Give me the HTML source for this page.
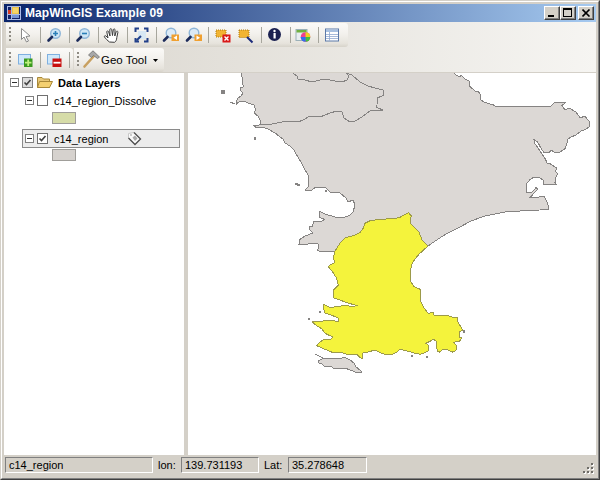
<!DOCTYPE html>
<html><head><meta charset="utf-8">
<style>
*{margin:0;padding:0;box-sizing:border-box}
html,body{width:600px;height:480px;overflow:hidden;background:#d4d0c8;font-family:"Liberation Sans",sans-serif}
.abs{position:absolute}
#win{position:absolute;left:0;top:0;width:600px;height:480px;background:#d4d0c8;overflow:hidden}
#title{position:absolute;left:4px;top:4px;width:592px;height:18px;background:linear-gradient(to right,#0a246a,#a6caf0)}
#ttext{position:absolute;left:21px;top:2px;color:#fff;font-weight:bold;font-size:12px;line-height:14px;letter-spacing:0.1px;white-space:nowrap}
.tb{position:absolute;height:24px;background:linear-gradient(to bottom,#fbfaf8 0%,#f3f1ed 45%,#e6e3dc 85%,#d7d3ca 100%);border-radius:0 3px 3px 0}
.grip{position:absolute;left:3px;top:4px;width:2px;height:14px;background:repeating-linear-gradient(to bottom,#8f8c84 0 2px,transparent 2px 4px)}
.sep{position:absolute;top:4px;width:1px;height:16px;background:#a7a69d}
.tree{position:absolute;font-size:11px;line-height:13px;color:#000;white-space:nowrap}
.exp{position:absolute;width:9px;height:9px;border:1px solid #808080;background:#fff}
.exp::after{content:"";position:absolute;left:1px;top:3px;width:5px;height:1px;background:#303030}
.chk{position:absolute;width:11px;height:11px;border:1px solid #707070;background:#fff}
.sw{position:absolute;width:24px;height:12px;border:1px solid #a09e9a}
.sp{position:absolute;top:457px;height:16px;border-top:1px solid #808080;border-left:1px solid #808080;border-right:1px solid #fff;border-bottom:1px solid #fff;font-size:11px;color:#000;padding-left:3px;line-height:14px;white-space:nowrap}
.sl{position:absolute;top:458px;font-size:11px;line-height:14px;color:#000}
</style></head>
<body>
<div id="win">
 <!-- window frame -->
 <div class="abs" style="left:0;top:0;width:600px;height:480px;border-top:1px solid #d4d0c8;border-left:1px solid #d4d0c8;border-right:1px solid #404040;border-bottom:1px solid #404040"></div>
 <div class="abs" style="left:1px;top:1px;width:598px;height:478px;border-top:1px solid #fff;border-left:1px solid #fff;border-right:1px solid #808080;border-bottom:1px solid #808080"></div>
 <div id="title">
  <svg class="abs" style="left:3px;top:2px" width="14" height="14" viewBox="0 0 14 14">
   <rect x="0" y="0" width="14" height="14" fill="#a9b9e6"/>
   <rect x="1" y="1" width="12" height="12" fill="#132268"/>
   <rect x="5" y="1" width="7" height="7" fill="#e9c24a"/>
   <rect x="6" y="2" width="5" height="5" fill="#f5d46a"/>
   <rect x="1" y="4" width="3" height="5" fill="#d63a22"/>
   <rect x="5" y="9" width="7" height="3" fill="#7694d4"/>
   <rect x="4" y="0" width="1" height="14" fill="#a9b9e6"/>
   <rect x="0" y="8" width="14" height="1" fill="#a9b9e6"/>
  </svg>
  <div id="ttext">MapWinGIS Example 09</div>
  <div class="abs" style="left:540px;top:2px;width:16px;height:14px;background:#d4d0c8;border:1px solid;border-color:#fff #404040 #404040 #fff;box-shadow:inset -1px -1px 0 #808080"><div class="abs" style="left:3px;top:8px;width:6px;height:2px;background:#000"></div></div>
  <div class="abs" style="left:556px;top:2px;width:16px;height:14px;background:#d4d0c8;border:1px solid;border-color:#fff #404040 #404040 #fff;box-shadow:inset -1px -1px 0 #808080"><div class="abs" style="left:2px;top:1px;width:9px;height:9px;border:1px solid #000;border-top-width:2px"></div></div>
  <div class="abs" style="left:574px;top:2px;width:16px;height:14px;background:#d4d0c8;border:1px solid;border-color:#fff #404040 #404040 #fff;box-shadow:inset -1px -1px 0 #808080">
   <svg class="abs" style="left:3px;top:2px" width="9" height="8" viewBox="0 0 9 8"><path d="M0.5,0.5 L7.5,7.5 M7.5,0.5 L0.5,7.5" stroke="#000" stroke-width="1.6"/></svg>
  </div>
 </div>
 <!-- toolbar area -->
 <div class="abs" style="left:4px;top:22px;width:592px;height:50px;background:linear-gradient(to right,#d8d4cc,#f6f5f2)"></div>
 <div class="tb" style="left:6px;top:23px;width:342px">
  <div class="grip"></div>
  <div class="sep" style="left:34px"></div>
  <div class="sep" style="left:63px"></div>
  <div class="sep" style="left:92px"></div>
  <div class="sep" style="left:121px"></div>
  <div class="sep" style="left:150px"></div>
  <div class="sep" style="left:202px"></div>
  <div class="sep" style="left:255px"></div>
  <div class="sep" style="left:284px"></div>
  <div class="sep" style="left:312px"></div>
 </div>
 <div class="tb" style="left:6px;top:48px;width:67px">
  <div class="grip"></div>
  <div class="sep" style="left:34px"></div>
  <div class="sep" style="left:63px"></div>
 </div>
 <div class="tb" style="left:74px;top:48px;width:90px">
  <div class="grip"></div>
  <div class="abs" style="left:27px;top:4px;font-size:11.5px;line-height:16px;color:#000;white-space:nowrap">Geo Tool</div>
  <svg class="abs" style="left:79px;top:11px" width="6" height="4" viewBox="0 0 6 4"><path d="M0,0 H5 L2.5,3 Z" fill="#000"/></svg>
 </div>
  <svg class="abs" style="left:0;top:0" width="600" height="72" viewBox="0 0 600 72">
  <!-- arrow -->
  <path d="M21.5,28.5 V39.5 L24,37 L26.5,42 L28.5,41 L26,36.5 L30,36 Z" fill="#fff" stroke="#8a8a8a" stroke-width="1"/>
  <!-- zoom in -->
  <circle cx="55.5" cy="33.5" r="4.8" fill="#cfe6f5" stroke="#8fb6d8" stroke-width="1.4"/>
  <path d="M48.5,40.5 L52,37" stroke="#1c2b5a" stroke-width="2.6" stroke-linecap="round"/>
  <path d="M53,33.5 H58 M55.5,31 V36" stroke="#2a7fb8" stroke-width="1.6"/>
  <!-- zoom out -->
  <circle cx="84.5" cy="33.5" r="4.8" fill="#cfe6f5" stroke="#8fb6d8" stroke-width="1.4"/>
  <path d="M77.5,40.5 L81,37" stroke="#1c2b5a" stroke-width="2.6" stroke-linecap="round"/>
  <path d="M82,33.5 H87" stroke="#2a7fb8" stroke-width="1.6"/>
  <!-- hand -->
  <g transform="translate(104,27.5)">
   <path d="M5.5,14.5 C3.5,13 1.5,11 0.5,9.5 C0,8.5 1,7.8 2,8.5 L4,10.5 L2.8,4.5 C2.6,3.3 4.2,3 4.6,4.2 L6,8.5 L5.8,2.2 C5.8,1 7.5,0.8 7.7,2 L8.5,8 L9.3,2.2 C9.5,1 11.2,1.2 11,2.5 L10.8,8.5 L12.2,4.2 C12.6,3.2 14.2,3.6 13.9,4.8 L12.8,10 C12.6,12.5 12,14 10.5,14.8 Z" fill="#fff" stroke="#3a3a3a" stroke-width="1"/>
  </g>
  <!-- full extent -->
  <rect x="138" y="31" width="8" height="8" fill="#d8e8f4"/>
  <path d="M135.5,32 V28.5 H139 M144,28.5 H147.5 V32 M147.5,38 V41.5 H144 M139,41.5 H135.5 V38" fill="none" stroke="#22408a" stroke-width="2"/>
  <path d="M136.5,40.5 L141,36" stroke="#22408a" stroke-width="2"/>
  <!-- zoom prev -->
  <circle cx="171" cy="33" r="4.8" fill="#dbeaf6" stroke="#8fb6d8" stroke-width="1.4"/>
  <path d="M164,40.5 L167.5,37" stroke="#1c2b5a" stroke-width="2.6" stroke-linecap="round"/>
  <rect x="171.5" y="34.5" width="7.5" height="6.5" fill="#f0a030"/>
  <path d="M177,35.5 L173.5,37.7 L177,40" fill="#fff"/>
  <!-- zoom next -->
  <circle cx="194" cy="33" r="4.8" fill="#dbeaf6" stroke="#8fb6d8" stroke-width="1.4"/>
  <path d="M187,40.5 L190.5,37" stroke="#1c2b5a" stroke-width="2.6" stroke-linecap="round"/>
  <rect x="194.5" y="34.5" width="7.5" height="6.5" fill="#f0a030"/>
  <path d="M196.5,35.5 L200,37.7 L196.5,40" fill="#fff"/>
  <!-- select remove -->
  <rect x="216" y="30" width="10" height="7" fill="#f2b432" stroke="#b07a10" stroke-width="1" stroke-dasharray="1 1"/>
  <rect x="222.5" y="34.5" width="8" height="8" fill="#d81818"/>
  <path d="M224.5,36.5 L228.5,40.5 M228.5,36.5 L224.5,40.5" stroke="#fff" stroke-width="1.4"/>
  <!-- select -->
  <rect x="239" y="30" width="10" height="7.5" fill="#f2b432" stroke="#b07a10" stroke-width="1" stroke-dasharray="1 1"/>
  <path d="M247,37 L252.5,42.5" stroke="#1c2b7a" stroke-width="2"/>
  <!-- info -->
  <circle cx="274.5" cy="34.5" r="6.5" fill="#1a2050"/>
  <circle cx="274.5" cy="31" r="1.2" fill="#fff"/>
  <rect x="273.5" y="33" width="2.2" height="5.5" fill="#fff"/>
  <!-- color -->
  <rect x="296" y="29.5" width="11" height="11" fill="#e8eef0" stroke="#9ab0b8" stroke-width="1"/>
  <rect x="296.5" y="30" width="10" height="2.5" fill="#70b040"/>
  <circle cx="305.5" cy="37" r="4.8" fill="#f04090"/>
  <path d="M305.5,37 L305.5,32.2 A4.8,4.8 0 0 1 310.3,37 Z" fill="#f0d020"/>
  <path d="M305.5,37 L310.3,37 A4.8,4.8 0 0 1 305.5,41.8 Z" fill="#40c040"/>
  <path d="M305.5,37 L305.5,41.8 A4.8,4.8 0 0 1 300.7,37 Z" fill="#3070f0"/>
  <!-- table -->
  <rect x="325.5" y="29" width="13" height="12" fill="#fff" stroke="#5a78a8" stroke-width="1"/>
  <rect x="326" y="29.5" width="12" height="2.5" fill="#a8c0e0"/>
  <path d="M326,34.5 H338 M326,36.5 H338 M326,38.5 H338 M329.5,32 V40.5" stroke="#90a8d0" stroke-width="0.8"/>
  <!-- add layer -->
  <rect x="18.5" y="54.5" width="12" height="9.5" fill="#cfe8fa" stroke="#7fb0e0" stroke-width="1"/>
  <rect x="24" y="58.5" width="8.5" height="8.5" fill="#3a9a20"/>
  <path d="M25,62.7 H31.5 M28.2,59.5 V66" stroke="#c0f080" stroke-width="1.8"/>
  <!-- remove layer -->
  <rect x="47.5" y="54.5" width="12" height="9.5" fill="#cfe8fa" stroke="#7fb0e0" stroke-width="1"/>
  <rect x="52.5" y="58.5" width="9" height="8.5" fill="#c81010"/>
  <path d="M53.5,62.7 H60.5" stroke="#fff" stroke-width="1.8"/>
  <!-- hammer -->
  <path d="M84.5,66.5 L93.5,56.5" stroke="#c8a060" stroke-width="2.6" stroke-linecap="round"/>
  <path d="M88.5,55 L93,50.8 L99.5,57 L97.5,58.5 L93.5,55.5 L91.5,57.5 Z" fill="#a8a8a8" stroke="#707070" stroke-width="0.8"/>
 </svg>

 <!-- left panel -->
 <div class="abs" style="left:4px;top:73px;width:180px;height:382px;background:#fff"></div>
 <div class="abs" style="left:184px;top:73px;width:4px;height:382px;background:#d4d0c8"></div>
  <div class="exp" style="left:10px;top:78px"></div>
 <div class="chk" style="left:22px;top:77px;background:#dcdcdc;border-color:#808080"></div>
 <svg class="abs" style="left:22px;top:77px" width="11" height="11" viewBox="0 0 11 11"><path d="M2.5,5.5 L4.5,7.5 L8.5,3" fill="none" stroke="#404040" stroke-width="1.6"/></svg>
 <svg class="abs" style="left:37px;top:76px" width="16" height="12" viewBox="0 0 16 12">
  <path d="M0.5,1.5 H5 L6.5,3 H12.5 V11.5 H0.5 Z" fill="#e8c878" stroke="#a88838" stroke-width="1"/>
  <path d="M2.5,5.5 H15.5 L12.5,11.5 H0.5 Z" fill="#f4d070" stroke="#a88838" stroke-width="1"/>
 </svg>
 <div class="tree" style="left:58px;top:77px;font-weight:bold">Data Layers</div>
 <div class="exp" style="left:25px;top:96px"></div>
 <div class="chk" style="left:37px;top:95px"></div>
 <div class="tree" style="left:54px;top:95px">c14_region_Dissolve</div>
 <div class="sw" style="left:52px;top:112px;background:#d6dca8"></div>
 <div class="abs" style="left:22px;top:129px;width:158px;height:19px;background:#ececec;border:1px solid #8a8a8a"></div>
 <div class="exp" style="left:25px;top:134px"></div>
 <div class="chk" style="left:37px;top:133px"></div>
 <svg class="abs" style="left:37px;top:133px" width="11" height="11" viewBox="0 0 11 11"><path d="M2.5,5.5 L4.5,7.5 L8.5,3" fill="none" stroke="#404040" stroke-width="1.6"/></svg>
 <div class="tree" style="left:54px;top:133px">c14_region</div>
 <svg class="abs" style="left:120px;top:128px" width="25" height="20" viewBox="120 128 25 20">
  <path d="M128.5,133.5 L134,132.5 L140.5,139 L135,144.5 L128.5,138 Z" fill="#fafafa" stroke="#c8c8c8" stroke-width="1"/>
  <path d="M134,132.5 L140.5,139 L135,144.5 L128.5,138" fill="none" stroke="#505050" stroke-width="1.3"/>
  <path d="M132.5,137.5 L135,135.5 L137.5,138.5 L135,141 Z" fill="#a8a8a8"/>
  <circle cx="131" cy="135" r="0.8" fill="#909090"/>
 </svg>
 <div class="sw" style="left:52px;top:149px;background:#d6d2ce"></div>

 <!-- map -->
 <div class="abs" style="left:188px;top:73px;width:408px;height:382px;background:#fff"></div>
 <svg class="abs" style="left:0;top:0" width="600" height="480" viewBox="0 0 600 480">
<defs><clipPath id="mc"><rect x="188" y="73" width="408" height="382"/></clipPath></defs>
<g clip-path="url(#mc)" stroke-linejoin="round" shape-rendering="crispEdges">
<polygon points="241,60 454,60 454,73 456,75 460,77 461,75 465,79 469,81 470,84 469,86 473,89 476,92 478,91 480,94 481,100 484,102 490,104 492,104 495,106 502,106 535,106.5 550,107 554,103 560,102 566,102.5 562,105.5 565,110 569,108 576,112 580,117.5 585,116.5 589,121 590,126.5 585,129.5 581,131 576,135 571,137 567,139.5 567,143 565,148.75 560,152 555,153 551.25,150 548.75,153 543.75,152.5 540.6,147.5 537.5,141.9 534,139.5 535,143.75 540,151 545.6,159.4 546.9,163 550,163.75 555,166.9 557,167.5 555.6,171.25 557.5,173.75 555.6,177.5 555,182.5 556.25,185 543,184 543,180 540,178 534,177 530,179.5 526.7,183.5 527,189 526,192 532,192 536,187.7 537.6,189.3 530,197.6 544.4,196.6 548,204.4 548.5,209.6 540,210 530.8,210.1 520,211 510,211 500,213 485,216 471,221 457,228.5 446,234 436,240.5 428,246 422,240 419,232 414,227 410,222.7 411.3,216 408.7,212.7 404.7,214.7 400,217.3 393.3,218.7 380,219.3 370,220.8 365,223.3 363.3,228.3 360,232.5 355,235 345,238 340,243.3 335,251 333,251.4 325,251.4 320,252 317,249.7 319,248 318,244 310,243.4 305,245 299,244.5 300,239.4 305,236 313,233 309.5,229.6 310,226.2 312.3,226.2 314,221.6 322,221 324.4,219.3 319.8,217.6 319.8,211.3 325,214 335,217 343,218 350,215 353,212 355,205 353,200 348,202 346,198 340,193 330,192 325,187 316,187 312,190 305,190 308,187 308,184 308,175 304,168 301,162 297.5,156.5 294,150 290,146 285,143 283,139 275,133 268,129 262,127 256,127.5 254,125.5 259,125 261,124 260,120 258,116 254,113 255.5,110 254,105 248,103 244,101 240,101 236.5,104 236,102 238,98 241,96 243,93 240,90 240,88 243,87 243,85 242,77 241,73 241,60" fill="#dcd8d5" stroke="#858382" stroke-width="1"/>
<polygon points="335,251 340,243.3 345,238 355,235 360,232.5 363.3,228.3 365,223.3 370,220.8 380,219.3 393.3,218.7 400,217.3 404.7,214.7 408.7,212.7 411.3,216 410,222.7 414,227 419,232 422,240 428,246 420,253.3 418.3,255 412.5,262.5 410,271.7 410.8,281.7 414.2,286.7 420,289.2 420,300 424.2,308.3 428.3,313.3 433.2,312.6 434.3,315.7 440,315.7 447.3,315.5 452.5,317.3 457.2,317.8 458.2,323 461.4,327.2 462.4,330.3 459.3,331.9 459.3,337 461.9,338.1 459.3,341.25 453,342.3 456.1,344.9 456.1,350.1 453,352.2 448.3,350.1 443.1,349.1 440,352.2 437.4,351.1 436.4,345.9 436.4,341.25 433.2,339.2 430.1,341.25 425.9,343.3 429.1,345.9 428,351.1 423.3,353.2 420,354.2 415,353.3 410,351.7 403.3,350 400,349.2 396.7,352.5 390,355 385,354.2 380.7,352.9 375,350 369.8,351.5 362.2,353.3 362.2,358.5 359.8,357.3 356.9,354.4 351.7,355 345.3,353.8 340,352.1 331.8,352.1 324.8,349.2 316.7,345.7 318.4,343.3 323.1,339.8 330,339.8 333,336.9 328.9,335.2 324.3,332.8 321.9,328.75 316.7,325.8 313.2,322.9 312.3,321.3 318,322 328,320 339,321.5 338,318 330,314.5 325,313 324,310 323,304 330,307.5 338,306.5 345,305.5 353,306.5 358,305 355,305 348,303 341,300.5 334,298 333.4,290 338.3,285 336.7,278.3 332.5,271.7 328.3,266.7 330,265 335,262.5 333.3,258.3" fill="#f4f33c" stroke="#9c9a4a" stroke-width="1"/>
<polygon points="318,361 322,359 330,358 336,359 345,357.5 350,360 354,363 356,367 360,370 362,372 358,373 350,370 345,368 338,368 335,369 330,366 325,367 322,364 319,363" fill="#dcd8d5" stroke="#858382" stroke-width="1"/>
<polyline points="293,60 293,73 297,76 298,79 305,80 312,82 320,80 325,79 335,81 342,82 347,80 349,76 346,73" fill="none" stroke="#858382" stroke-width="1"/>
<polyline points="346,60 346,73 352,75 360,82 368,86 375,88 383,90 383.5,95.3 377.3,98 377,105 376,107 382.7,110 375,110 370,111 362,117 355,121 350,122 344,118 342,112 337,111 330,113 320,117 310,116 303,120 298,122 292,121 282,122 272,124 265,124 261,125" fill="none" stroke="#858382" stroke-width="1"/>
<line x1="315" y1="354" x2="323" y2="358" stroke="#858382" stroke-width="1"/>
<rect x="221" y="90" width="4" height="4" fill="#858382"/>
<rect x="254" y="137" width="2" height="3" fill="#858382"/>
<path d="M230,102 L235,104" stroke="#858382" stroke-width="1.2"/>
<path d="M295,183.5 L300,185.5" stroke="#858382" stroke-width="2"/>
<rect x="411" y="355" width="2" height="2" fill="#858382"/>
<rect x="425.5" y="356" width="2" height="2" fill="#858382"/>
<rect x="463" y="330" width="2" height="3" fill="#858382"/>
<rect x="325" y="190" width="2" height="2" fill="#858382"/>
<rect x="319" y="311" width="2" height="2" fill="#858382"/>
<rect x="308" y="318" width="2" height="2" fill="#858382"/>
</g></svg>
 <!-- status -->
 <div class="abs" style="left:4px;top:455px;width:592px;height:21px;background:#d4d0c8"></div>
 <div class="sp" style="left:5px;width:148px">c14_region</div>
 <div class="sl" style="left:158px">lon:</div>
 <div class="sp" style="left:181px;width:78px">139.731193</div>
 <div class="sl" style="left:264px">Lat:</div>
 <div class="sp" style="left:288px;width:79px">35.278648</div>
 <svg class="abs" style="left:0;top:0" width="600" height="480" viewBox="0 0 600 480"><g fill="#fff"><rect x="592" y="464" width="2" height="2"/><rect x="588" y="468" width="2" height="2"/><rect x="592" y="468" width="2" height="2"/><rect x="584" y="472" width="2" height="2"/><rect x="588" y="472" width="2" height="2"/><rect x="592" y="472" width="2" height="2"/></g><g fill="#6f6d68"><rect x="591" y="463" width="2" height="2"/><rect x="587" y="467" width="2" height="2"/><rect x="591" y="467" width="2" height="2"/><rect x="583" y="471" width="2" height="2"/><rect x="587" y="471" width="2" height="2"/><rect x="591" y="471" width="2" height="2"/></g></svg>
</div>
</body></html>
